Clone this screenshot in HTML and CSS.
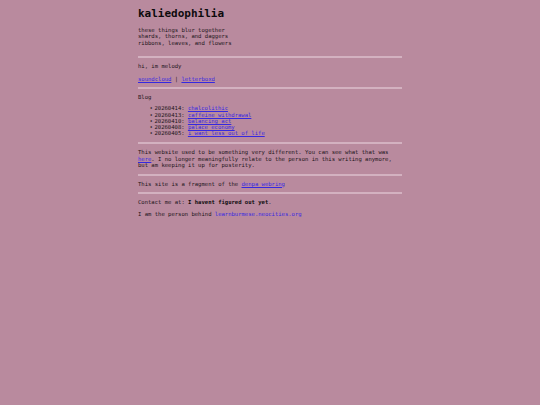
FILE: index.html
```html
<!DOCTYPE html>
<html>
<head>
<meta charset="utf-8">
<link rel="stylesheet" href="styles.css">
</head>
<body>
<main class="page">
  <h1 class="title">kaliedophilia</h1>
  <p class="tagline">these things blur together<br>shards, thorns, and daggers<br>ribbons, leaves, and flowers</p>
  <hr class="rule rule-top">
  <p class="para">hi, im melody</p>
  <p class="para links"><a href="#">soundcloud</a> | <a href="#">letterboxd</a></p>
  <hr class="rule">
  <p class="para">Blog</p>
  <ul class="blog">
    <li>20260414: <a href="#">chalcolithic</a></li>
    <li>20260413: <a href="#">caffeine withdrawal</a></li>
    <li>20260410: <a href="#">balancing act</a></li>
    <li>20260408: <a href="#">palace economy</a></li>
    <li>20260405: <a href="#">i want less out of life</a></li>
  </ul>
  <hr class="rule">
  <p class="para">This website used to be something very different. You can see what that was <a href="#">here</a>. I no longer meaningfully relate to the person in this writing anymore, but am keeping it up for posterity.</p>
  <hr class="rule">
  <p class="para">This site is a fragment of the <a href="#">denpa webring</a></p>
  <hr class="rule">
  <p class="para">Contact me at: <b>I havent figured out yet</b>.</p>
  <p class="para">I am the person behind <a href="#">learnburmese.neocities.org</a></p>
</main>
</body>
</html>
```
FILE: styles.css
```css
html, body {
  margin: 0;
  padding: 0;
  background: #b98a9e;
}
body {
  font-family: "DejaVu Sans Mono", monospace;
  font-size: 5.55px;
  line-height: 6.3px;
  color: #1c1418;
}
.page {
  width: 264px;
  margin: 0 auto;
  padding-top: 7px;
  display: flex;
  flex-direction: column;
}
.title {
  font-size: 11px;
  line-height: 13px;
  font-weight: bold;
  color: #0d0a0c;
  margin: 0 0 7px 0;
}
.tagline {
  margin: 0;
}
.para {
  margin: 5px 0 0 0;
}
.links {
  margin-top: 6.5px;
}
a {
  color: #3528e0;
  text-decoration: underline;
  text-underline-offset: 0.5px;
}
b {
  font-weight: bold;
  color: #0d0a0c;
}
.rule {
  width: 100%;
  height: 0;
  margin: 5.5px 0 0 0;
  border: 0;
  border-top: 2px solid #d3b1c0;
}
.rule-top {
  margin-top: 10px;
}
.blog {
  margin: 4.5px 0 0 0;
  padding-left: 17px;
  list-style: none;
}
.blog li {
  line-height: 6.3px;
}
.blog li::before {
  content: "\2022";
  display: inline-block;
  width: 5px;
  margin-left: -5.5px;
}
```
